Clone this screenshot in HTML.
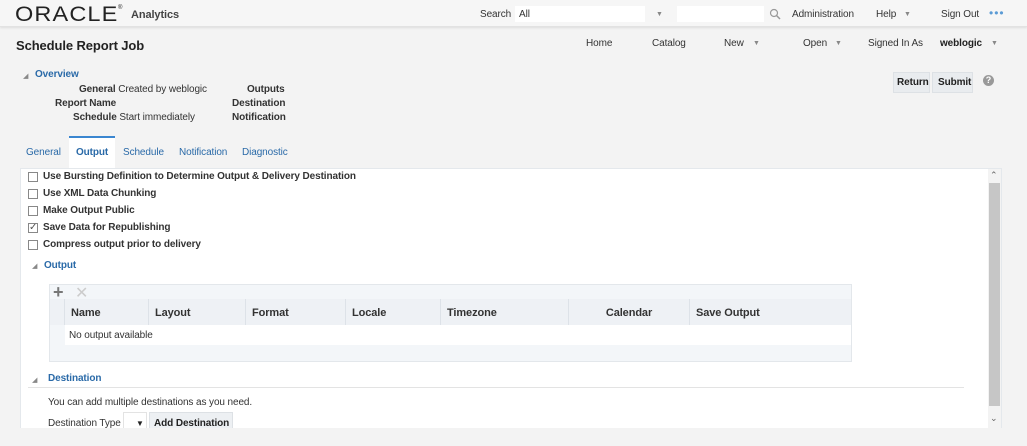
<!DOCTYPE html>
<html><head><meta charset="utf-8"><style>
*{margin:0;padding:0;box-sizing:border-box}
body{width:1027px;height:446px;background:#f3f3f3;font-family:"Liberation Sans",sans-serif;font-size:10px;letter-spacing:-0.1px;color:#333;position:relative;overflow:hidden}
.a{position:absolute;white-space:nowrap}
.b{font-weight:bold}
.blue{color:#2a6aa8}
.hdr{position:absolute;left:0;top:0;width:1027px;height:27px;background:#f6f6f6;border-bottom:1px solid #e2e2e2;box-shadow:0 1px 2px #ddd}
.inp{position:absolute;background:#fff;height:16px}
.tri{font-size:7px;color:#888}
.cb{position:absolute;width:10px;height:10px;border:1px solid #888;background:#fff}
.panel{position:absolute;left:20px;top:168px;width:982px;height:261px;background:#fff;border:1px solid #e4e8ec}
.th{position:absolute;top:299px;height:26px;background:#eef1f5;border-right:1px solid #dde2e8;font-weight:bold;font-size:11px;padding:8px 0 0 6px;color:#333}
</style></head><body>
<div class="hdr"></div>
<div class="a" style="left:15px;top:3px;font-size:21px;letter-spacing:1px;color:#222;transform:scaleX(1.12);transform-origin:left">ORACLE</div>
<div class="a" style="left:118px;top:5px;font-size:6px;color:#222">®</div>
<div class="a b" style="left:131px;top:9px;font-size:11px;color:#444">Analytics</div>
<div class="a" style="left:480px;top:9px">Search</div>
<div class="inp" style="left:515px;top:6px;width:130px"></div>
<div class="a" style="left:519px;top:9px">All</div>
<div class="a tri" style="left:656px;top:11px">▼</div>
<div class="inp" style="left:677px;top:6px;width:87px"></div>
<svg class="a" style="left:769px;top:8px" width="12" height="12"><circle cx="5" cy="5" r="3.5" fill="none" stroke="#999" stroke-width="1.2"/><path d="M7.5 7.5L11 11" stroke="#999" stroke-width="1.5"/></svg>
<div class="a" style="left:792px;top:9px">Administration</div>
<div class="a" style="left:876px;top:9px">Help</div><div class="a tri" style="left:904px;top:11px">▼</div>
<div class="a" style="left:941px;top:9px">Sign Out</div>
<div class="a" style="left:989px;top:6px;color:#5b9bd5;font-size:12px;letter-spacing:1px">•••</div>

<div class="a b" style="left:16px;top:38px;font-size:13px;color:#222">Schedule Report Job</div>
<div class="a" style="left:586px;top:38px">Home</div>
<div class="a" style="left:652px;top:38px">Catalog</div>
<div class="a" style="left:724px;top:38px">New</div><div class="a tri" style="left:753px;top:40px">▼</div>
<div class="a" style="left:803px;top:38px">Open</div><div class="a tri" style="left:835px;top:40px">▼</div>
<div class="a" style="left:868px;top:38px">Signed In As</div>
<div class="a b" style="left:940px;top:38px;color:#222">weblogic</div><div class="a tri" style="left:991px;top:40px">▼</div>

<div class="a tri" style="left:23px;top:72px">◢</div>
<div class="a b blue" style="left:35px;top:69px">Overview</div>
<div class="a" style="left:79px;top:84px"><b>General</b> Created by weblogic</div>
<div class="a b" style="left:247px;top:84px">Outputs</div>
<div class="a b" style="left:55px;top:98px">Report Name</div>
<div class="a b" style="left:232px;top:98px">Destination</div>
<div class="a" style="left:73px;top:112px"><b>Schedule</b> Start immediately</div>
<div class="a b" style="left:232px;top:112px">Notification</div>

<div class="a" style="left:893px;top:72px;width:37px;height:21px;background:#e9ecef;border:1px solid #dde1e5"></div>
<div class="a b" style="left:897px;top:77px;color:#222">Return</div>
<div class="a" style="left:932px;top:72px;width:41px;height:21px;background:#e9ecef;border:1px solid #dde1e5"></div>
<div class="a b" style="left:938px;top:77px;color:#222">Submit</div>
<div class="a" style="left:983px;top:75px;width:11px;height:11px;border-radius:50%;background:#999;color:#fff;font-size:9px;font-weight:bold;text-align:center;line-height:11px">?</div>

<div class="a" style="left:69px;top:136px;width:46px;height:32px;background:#fff;border-top:2px solid #3a86d0"></div>
<div class="a blue" style="left:26px;top:147px">General</div>
<div class="a b blue" style="left:76px;top:147px">Output</div>
<div class="a blue" style="left:123px;top:147px">Schedule</div>
<div class="a blue" style="left:179px;top:147px">Notification</div>
<div class="a blue" style="left:242px;top:147px">Diagnostic</div>

<div class="panel"></div>
<div class="cb" style="left:28px;top:172px"></div><div class="a b" style="left:43px;top:171px">Use Bursting Definition to Determine Output &amp; Delivery Destination</div>
<div class="cb" style="left:28px;top:189px"></div><div class="a b" style="left:43px;top:188px">Use XML Data Chunking</div>
<div class="cb" style="left:28px;top:206px"></div><div class="a b" style="left:43px;top:205px">Make Output Public</div>
<div class="cb" style="left:28px;top:223px;font-size:10px;line-height:8px;color:#555">✓</div><div class="a b" style="left:43px;top:222px">Save Data for Republishing</div>
<div class="cb" style="left:28px;top:240px"></div><div class="a b" style="left:43px;top:239px">Compress output prior to delivery</div>
<div class="a tri" style="left:32px;top:262px">◢</div>
<div class="a b blue" style="left:44px;top:260px">Output</div>

<div class="a" style="left:49px;top:284px;width:803px;height:78px;background:#f3f6f9;border:1px solid #e3e7eb"></div>
<div class="a" style="left:53px;top:282px;font-size:18px;color:#777;font-weight:bold">+</div>
<div class="a" style="left:75px;top:283px;font-size:16px;color:#ccc">✕</div>
<div class="th" style="left:50px;width:15px;padding:0"></div>
<div class="th" style="left:65px;width:84px">Name</div>
<div class="th" style="left:149px;width:97px">Layout</div>
<div class="th" style="left:246px;width:100px">Format</div>
<div class="th" style="left:346px;width:95px">Locale</div>
<div class="th" style="left:441px;width:128px">Timezone</div>
<div class="th" style="left:569px;width:121px;text-align:center;padding-left:0">Calendar</div>
<div class="th" style="left:690px;width:161px;border-right:none">Save Output</div>
<div class="a" style="left:65px;top:325px;width:786px;height:20px;background:#fff"></div>
<div class="a" style="left:69px;top:330px">No output available</div>

<div class="a tri" style="left:32px;top:376px">◢</div>
<div class="a b blue" style="left:48px;top:373px">Destination</div>
<div class="a" style="left:28px;top:387px;width:936px;height:1px;background:#e3e3e3"></div>
<div class="a" style="left:48px;top:397px">You can add multiple destinations as you need.</div>
<div class="a" style="left:48px;top:418px">Destination Type</div>
<div class="a" style="left:123px;top:412px;width:24px;height:17px;border:1px solid #e3e3e3;background:#fff"></div>
<div class="a" style="left:136px;top:419px;font-size:8px;color:#222">▼</div>
<div class="a" style="left:149px;top:412px;width:84px;height:17px;background:#edf0f3;border:1px solid #dde1e5"></div>
<div class="a b" style="left:154px;top:418px;color:#222">Add Destination</div>
<div class="a" style="left:0;top:428px;width:1027px;height:18px;background:#f3f3f3"></div>

<div class="a" style="left:988px;top:169px;width:13px;height:259px;background:#f3f3f3"></div>
<div class="a" style="left:989px;top:183px;width:11px;height:223px;background:#c6c6c6"></div>
<div class="a" style="left:990px;top:170px;font-size:9px;color:#666">⌃</div>
<div class="a" style="left:990px;top:413px;font-size:9px;color:#666">⌄</div>
</body></html>
